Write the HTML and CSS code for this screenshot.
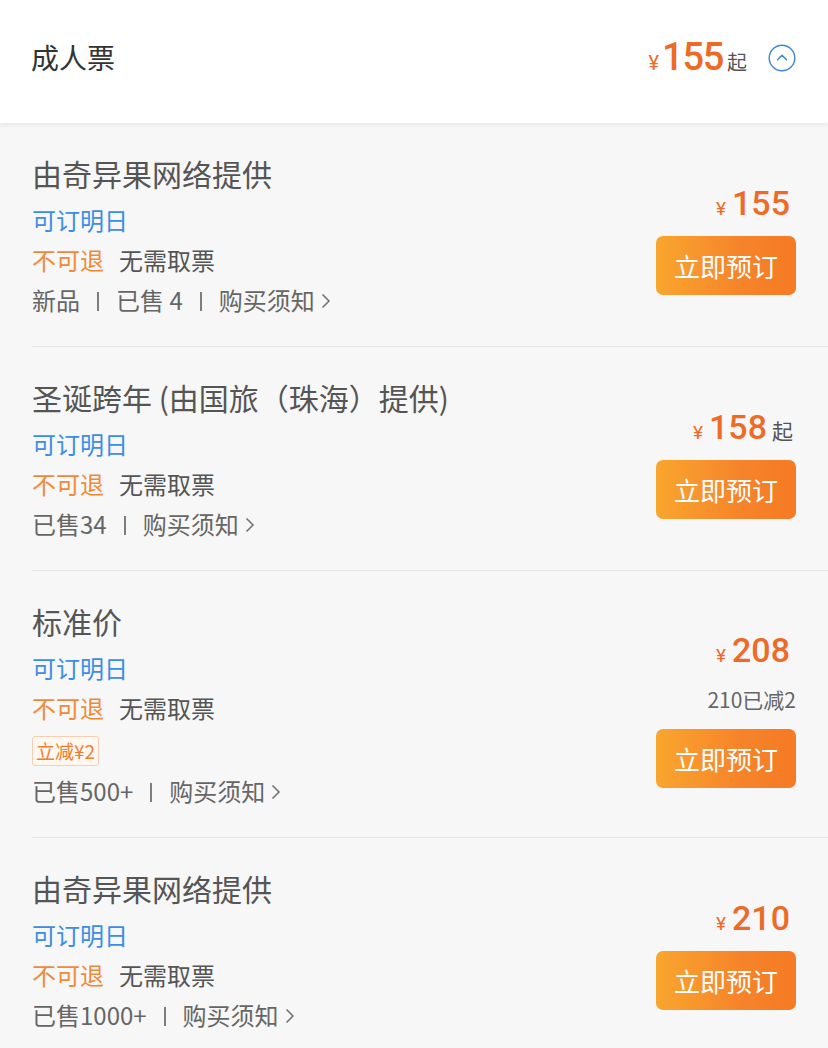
FILE: index.html
```html
<!DOCTYPE html>
<html lang="zh-CN">
<head>
<meta charset="utf-8">
<title>成人票</title>
<link rel="stylesheet" href="styles.css">
</head>
<body>
<div class="header">
  <div class="header-title">成人票</div>
  <div class="header-right">
    <span class="h-yen">¥</span><span class="h-num">155</span><span class="h-qi">起</span>
    <svg class="h-toggle" width="28" height="28" viewBox="0 0 28 28">
      <circle cx="14" cy="14" r="12.8" fill="none" stroke="#3f86d4" stroke-width="1.4"/>
      <path d="M9.5 15.8 L14 11.3 L18.5 15.8" fill="none" stroke="#3f86d4" stroke-width="1.5" stroke-linecap="round" stroke-linejoin="round"/>
    </svg>
  </div>
</div>

<div class="list">
  <div class="item">
    <div class="info">
      <div class="title">由奇异果网络提供</div>
      <div class="avail">可订明日</div>
      <div class="policy"><span class="norefund">不可退</span><span class="noticket">无需取票</span></div>
      <div class="meta"><span>新品</span><i class="sep"></i><span>已售 4</span><i class="sep"></i><span>购买须知</span><svg class="chev" width="12" height="18" viewBox="0 0 12 18"><path d="M2.5 2.5 L9 9 L2.5 15.5" fill="none" stroke="#707070" stroke-width="1.5"/></svg></div>
    </div>
    <div class="buy">
      <div class="price"><span class="yen">¥</span><span class="num">155</span></div>
      <button class="btn">立即预订</button>
    </div>
  </div>

  <div class="item">
    <div class="info">
      <div class="title">圣诞跨年 (由国旅（珠海）提供)</div>
      <div class="avail">可订明日</div>
      <div class="policy"><span class="norefund">不可退</span><span class="noticket">无需取票</span></div>
      <div class="meta"><span>已售34</span><i class="sep"></i><span>购买须知</span><svg class="chev" width="12" height="18" viewBox="0 0 12 18"><path d="M2.5 2.5 L9 9 L2.5 15.5" fill="none" stroke="#707070" stroke-width="1.5"/></svg></div>
    </div>
    <div class="buy">
      <div class="price price-from"><span class="yen">¥</span><span class="num">158</span><span class="qi">起</span></div>
      <button class="btn">立即预订</button>
    </div>
  </div>

  <div class="item">
    <div class="info">
      <div class="title">标准价</div>
      <div class="avail">可订明日</div>
      <div class="policy"><span class="norefund">不可退</span><span class="noticket">无需取票</span></div>
      <div class="tag-row"><span class="tag">立减¥2</span></div>
      <div class="meta"><span>已售500+</span><i class="sep"></i><span>购买须知</span><svg class="chev" width="12" height="18" viewBox="0 0 12 18"><path d="M2.5 2.5 L9 9 L2.5 15.5" fill="none" stroke="#707070" stroke-width="1.5"/></svg></div>
    </div>
    <div class="buy">
      <div class="price"><span class="yen">¥</span><span class="num">208</span></div>
      <div class="discount">210已减2</div>
      <button class="btn">立即预订</button>
    </div>
  </div>

  <div class="item">
    <div class="info">
      <div class="title">由奇异果网络提供</div>
      <div class="avail">可订明日</div>
      <div class="policy"><span class="norefund">不可退</span><span class="noticket">无需取票</span></div>
      <div class="meta"><span>已售1000+</span><i class="sep"></i><span>购买须知</span><svg class="chev" width="12" height="18" viewBox="0 0 12 18"><path d="M2.5 2.5 L9 9 L2.5 15.5" fill="none" stroke="#707070" stroke-width="1.5"/></svg></div>
    </div>
    <div class="buy">
      <div class="price"><span class="yen">¥</span><span class="num">210</span></div>
      <button class="btn">立即预订</button>
    </div>
  </div>
</div>
</body>
</html>
```

FILE: styles.css
```css
* { box-sizing: border-box; }

html, body {
  margin: 0;
  padding: 0;
}

body {
  background: #f7f7f7;
  font-family: "Noto Sans CJK SC", "Noto Sans", sans-serif;
  color: #555;
  overflow: hidden;
}

.header {
  position: relative;
  z-index: 1;
  height: 123px;
  padding: 0 32px 9px 31px;
  background: #fff;
  display: flex;
  align-items: center;
  justify-content: space-between;
  box-shadow: 0 2px 5px rgba(0, 0, 0, 0.07);
}

.header-title {
  font-size: 28px;
  color: #333;
  line-height: 40px;
}

.header-right {
  display: flex;
  align-items: baseline;
}

.h-yen {
  font-family: Roboto, "Liberation Sans", sans-serif;
  font-size: 20px;
  color: #ee6b27;
  margin-right: 3px;
}

.h-num {
  font-family: Roboto, "Liberation Sans", sans-serif;
  font-size: 38px;
  font-weight: 500;
  color: #ee6b27;
  letter-spacing: -1.3px;
  line-height: 40px;
}

.h-qi {
  font-size: 20px;
  color: #555;
  margin-left: 4px;
}

.h-toggle {
  align-self: center;
  margin-left: 21px;
  margin-top: 2px;
}

.list {
  display: flex;
  flex-direction: column;
}

.item {
  margin-left: 32px;
  padding: 30px 32px 26px 0;
  border-bottom: 1px solid #e4e4e4;
  display: flex;
  align-items: center;
  justify-content: space-between;
}

.info {
  display: flex;
  flex-direction: column;
}

.title {
  font-size: 30px;
  line-height: 40px;
  color: #555;
  margin-bottom: 7px;
}

.avail {
  font-size: 24px;
  line-height: 40px;
  color: #3a8ee6;
}

.policy {
  font-size: 24px;
  line-height: 40px;
}

.norefund {
  color: #f08a3b;
}

.noticket {
  color: #555;
  margin-left: 15px;
}

.tag-row {
  display: flex;
  margin: 8px 0 5px;
}

.tag {
  display: inline-block;
  height: 30px;
  line-height: 28px;
  padding: 0 3px;
  font-size: 19px;
  color: #ef7e34;
  background: #fff7f0;
  border: 1px solid #f6cfb3;
  border-radius: 3px;
}

.meta {
  font-size: 24px;
  line-height: 40px;
  color: #666;
  display: flex;
  align-items: center;
}

.sep {
  display: inline-block;
  width: 2px;
  height: 19px;
  background: #7d7d7d;
  margin: 2px 17px 0;
}

.chev {
  margin-left: 5px;
  margin-top: 2px;
}

.buy {
  display: flex;
  flex-direction: column;
  align-items: flex-end;
}

.price {
  line-height: 50px;
  padding-right: 6px;
  margin-bottom: 2px;
  color: #ee6b27;
  display: flex;
  align-items: baseline;
}

.price-from {
  padding-right: 3px;
}

.yen {
  font-family: Roboto, "Liberation Sans", sans-serif;
  font-size: 19px;
  margin-right: 6px;
}

.num {
  font-family: Roboto, "Liberation Sans", sans-serif;
  font-size: 34px;
  font-weight: 500;
}

.qi {
  font-size: 21px;
  color: #555;
  margin-left: 5px;
}

.discount {
  font-size: 21px;
  line-height: 30px;
  color: #666;
  margin-top: 1px;
  margin-bottom: 15px;
}

.btn {
  width: 140px;
  height: 59px;
  border: none;
  border-radius: 7px;
  background: linear-gradient(90deg, #f9a62e 0%, #f6842a 60%, #f57a23 100%);
  color: #fff;
  font-family: "Noto Sans CJK SC", sans-serif;
  font-size: 26px;
  padding: 0;
  letter-spacing: 0;
}
```
